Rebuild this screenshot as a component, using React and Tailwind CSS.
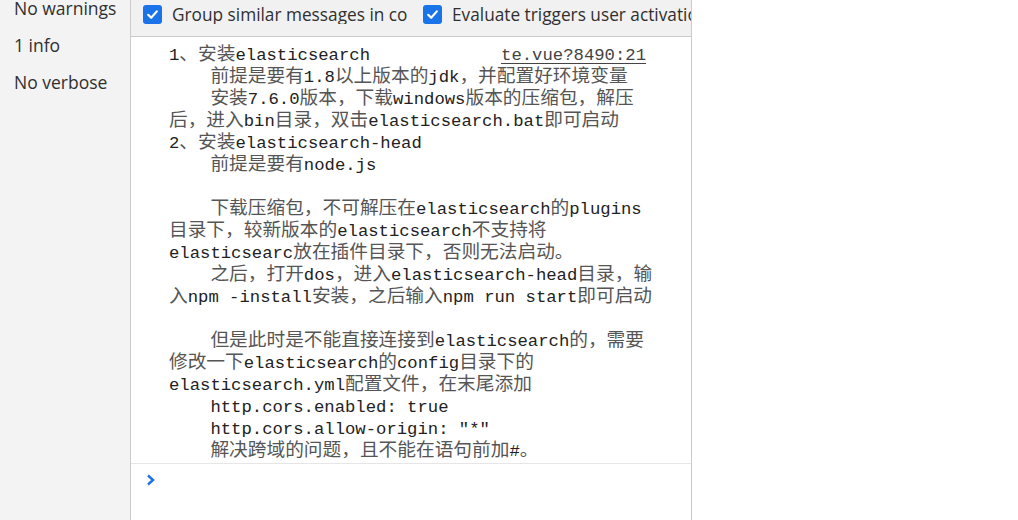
import React from "react";

const lines = [
  "1、安装elasticsearch",
  "    前提是要有1.8以上版本的jdk，并配置好环境变量",
  "    安装7.6.0版本，下载windows版本的压缩包，解压",
  "后，进入bin目录，双击elasticsearch.bat即可启动",
  "2、安装elasticsearch-head",
  "    前提是要有node.js",
  "",
  "    下载压缩包，不可解压在elasticsearch的plugins",
  "目录下，较新版本的elasticsearch不支持将",
  "elasticsearc放在插件目录下，否则无法启动。",
  "    之后，打开dos，进入elasticsearch-head目录，输",
  "入npm -install安装，之后输入npm run start即可启动",
  "",
  "    但是此时是不能直接连接到elasticsearch的，需要",
  "修改一下elasticsearch的config目录下的",
  "elasticsearch.yml配置文件，在末尾添加",
  "    http.cors.enabled: true",
  '    http.cors.allow-origin: "*"',
  "    解决跨域的问题，且不能在语句前加#。",
];

// split a line into latin / cjk runs, the cjk font is wider than the mono one
const CJK = /([\u3000-\u303f\u4e00-\u9fff\uff00-\uffef]+)/;

function Mixed({ text }) {
  return text.split(CJK).map((part, i) =>
    CJK.test(part) ? (
      <span
        key={i}
        className="text-[18.7px] leading-[14px] text-[#555] font-['Noto_Sans_CJK_SC',sans-serif]"
      >
        {part}
      </span>
    ) : (
      <span key={i}>{part}</span>
    )
  );
}

function Check() {
  return (
    <span className="flex h-[19px] w-[19px] shrink-0 items-center justify-center rounded-[3px] bg-[#1a73e8]">
      <svg width="13" height="13" viewBox="0 0 13 13" fill="none">
        <path
          d="M2.2 6.8 L5.2 9.8 L10.8 3.4"
          stroke="white"
          strokeWidth="2.2"
          strokeLinecap="round"
          strokeLinejoin="round"
        />
      </svg>
    </span>
  );
}

export default function App() {
  return (
    <div className="flex h-[520px] w-[1018px] overflow-hidden bg-white font-['Open_Sans','Noto_Sans',sans-serif] text-[#303030]">
      <aside className="w-[131px] shrink-0 border-r border-[#cbcbcb] bg-[#f3f3f3]">
        <div className="-mt-[10px] flex flex-col whitespace-nowrap text-[17.5px]">
          <div className="flex h-[37px] items-center px-[14px]">No warnings</div>
          <div className="flex h-[37px] items-center px-[14px]">1 info</div>
          <div className="flex h-[37px] items-center px-[14px]">No verbose</div>
        </div>
      </aside>

      <main className="flex w-[561px] shrink-0 flex-col border-r border-[#cbcbcb]">
        <div className="flex h-[37px] shrink-0 items-start overflow-hidden whitespace-nowrap border-b border-[#cbcbcb] bg-[#f1f1f1] pl-[12px] pt-[5px] text-[17.25px]">
          <div className="flex h-[19px] w-[265px] shrink-0 items-center gap-[10px] overflow-hidden">
            <Check />
            <span>Group similar messages in console</span>
          </div>
          <div className="ml-[15px] flex h-[19px] shrink-0 items-center gap-[10px]">
            <Check />
            <span>Evaluate triggers user activation</span>
          </div>
        </div>

        <div className="border-b border-[#e6e6e6] pl-[38px] pr-[45px] pt-[8px] font-['Liberation_Mono',monospace] text-[17.25px] text-[#222]">
          {lines.map((line, i) => (
            <div key={i} className="flex h-[22px] justify-between whitespace-pre leading-[22px]">
              <span>
                <Mixed text={line} />
              </span>
              {i === 0 && (
                <span className="underline underline-offset-[3px] text-[#444]">te.vue?8490:21</span>
              )}
            </div>
          ))}
        </div>

        <div className="flex-1 pl-[15px] pt-[10px]">
          <svg width="10" height="12" viewBox="0 0 10 12" fill="none">
            <path
              d="M2 1.5 L7 6 L2 10.5"
              stroke="#1a73e8"
              strokeWidth="2.4"
              strokeLinejoin="miter"
            />
          </svg>
        </div>
      </main>

      <div className="flex-1 bg-white" />
    </div>
  );
}
